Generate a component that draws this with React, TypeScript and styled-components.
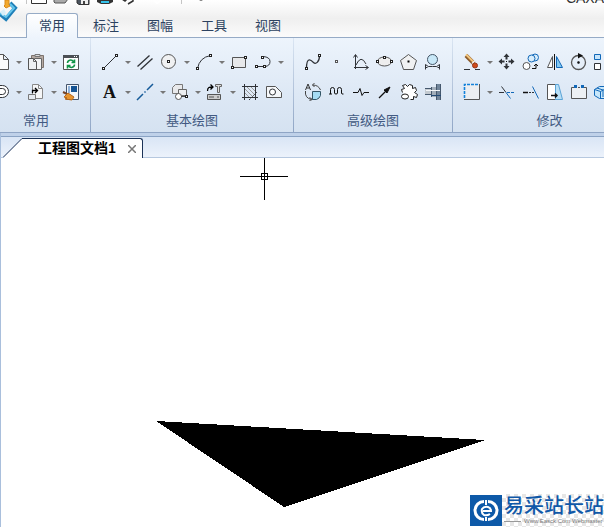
import React from 'react';
import styled, { createGlobalStyle } from 'styled-components';

const ink = '#303338';
const blue = '#1268b8';

const GlobalStyle = createGlobalStyle`
  * { box-sizing: border-box; }
  body { margin: 0; overflow: hidden; font-family: "Liberation Sans", "Noto Sans CJK SC", sans-serif; }
  button { font: inherit; color: inherit; margin: 0; padding: 0; border: 0; background: none; }
`;

const Window = styled.div`
  display: flex;
  flex-direction: column;
  min-height: 100vh;
  overflow: hidden;
  background: #fff;
`;

const Header = styled.header`
  position: relative;
  display: flex;
  flex-direction: column;
  background: linear-gradient(#ffffff, #efefef 50%, #fbfbfb);
  border-bottom: 1px solid #96abc6;
`;

const TitleBar = styled.div`
  display: flex;
  justify-content: space-between;
  height: 13px;
  overflow: hidden;
`;

const QuickAccess = styled.div`
  display: flex;
  padding-left: 26px;
`;

const Title = styled.span`
  margin-top: -10px;
  font-size: 14px;
  line-height: 16px;
  color: #333;
`;

const AppButton = styled.button`
  position: absolute;
  top: 0;
  left: 0;
  line-height: 0;
`;

const Tabs = styled.nav`
  display: flex;
  height: 24px;
  padding-left: 25px;
`;

const Tab = styled.button<{ $active?: boolean }>`
  height: ${p => (p.$active ? 25 : 24)}px;
  margin: 0 1px;
  padding: 0 12px;
  border: 1px solid ${p => (p.$active ? '#96abc6' : 'transparent')};
  border-bottom: 0;
  border-radius: 3px 3px 0 0;
  background: ${p => (p.$active ? 'linear-gradient(#ffffff, #edf4fc)' : 'none')};
  color: #2c4260;
  font-size: 13px;
  line-height: 22px;
  white-space: nowrap;
`;

const Ribbon = styled.section`
  display: flex;
  overflow: hidden;
  background: linear-gradient(#edf4fc, #dde8f5 60%, #d5e2f1);
  border-bottom: 1px solid #8fa5c5;
`;

const Group = styled.div<{ $clipped?: boolean }>`
  flex: none;
  display: flex;
  flex-direction: column;
  margin-left: ${p => (p.$clipped ? -18 : 0)}px;
  padding: 9px 7px 0;
  border-right: 1px solid;
  border-image: linear-gradient(#dbe6f3, #8fa5c5) 1;
`;

const ToolRow = styled.div`
  display: flex;
  height: 30px;
`;

const Tool = styled.button`
  display: grid;
  place-items: center;
  width: 24px;
  height: 30px;
`;

const DropButton = styled.button`
  display: grid;
  place-items: center;
  width: 11px;
  height: 30px;
`;

const Caret = styled.span`
  border: 3px solid transparent;
  border-top-color: #777;
  border-bottom: 0;
`;

const GroupLabel = styled.div`
  height: 25px;
  color: #425a82;
  font-size: 13px;
  line-height: 27px;
  text-align: center;
`;

const DocumentBar = styled.div`
  display: flex;
  height: 25px;
  padding: 5px 0 0 2px;
  background: linear-gradient(#bfd1e9 0 3px, #8aa3c4 3px 4px, #d9e5f5 4px, #ecf2fb);
  border-bottom: 1px solid #b6c8df;
  border-left: 1px solid #a9bfdc;
`;

const DocumentTab = styled.div`
  display: flex;
  height: 20px;
`;

const TabBody = styled.div`
  display: flex;
  align-items: center;
  gap: 12px;
  padding: 0 6px 0 15px;
  border-top: 1px solid #1c3358;
  border-right: 1px solid #1c3358;
  border-top-right-radius: 3px;
  background: #fff;
  color: #000;
  font-size: 14px;
  font-weight: bold;
  line-height: 18px;
  white-space: nowrap;
`;

const TabName = styled.span`
  height: 20px;
`;

const Close = styled.button`
  line-height: 0;
`;

const Canvas = styled.main`
  position: relative;
  flex: 1;
  min-height: 369px;
  overflow: hidden;
  border-left: 1px solid #a9bfdc;
  background: #fff;
`;

const Drawing = styled.svg`
  position: absolute;
  top: 0;
  left: 0;
`;

const Watermark = styled.div`
  position: absolute;
  right: 0;
  bottom: 0;
  display: flex;
  height: 33px;
`;

const WatermarkText = styled.div`
  padding: 0 0 0 2px;
  background: repeating-conic-gradient(#e6e6e6 0 25%, #fff 0 50%) 0 0 / 8px 8px;
`;

const Brand = styled.div`
  color: #1058a8;
  font-size: 20px;
  font-weight: 500;
  line-height: 24px;
`;

const Tagline = styled.div`
  display: flex;
  align-items: center;
  gap: 3px;
  color: #777;
  font-size: 6px;
  line-height: 6px;
  white-space: nowrap;
  &::before {
    content: '';
    width: 17px;
    border-top: 1px solid #999;
  }
`;

const Dot = ({ x, y }: { x: number; y: number }) => (
  <rect x={x} y={y} width="2" height="2" fill="#fff" stroke="#222" />
);

const icons: Record<string, React.ReactNode> = {
  page: <path d="M3.5 1.5h8l5 5v10h-13zM11.5 1.5v5h5" fill="#fafafa" stroke="#555" />,
  paste: <>
    <path d="M4.5 2.5h12v12h-12z" fill="#b5aaa3" stroke="#7d736d" />
    <path d="M8 1.5h5v2H8z" fill="#ddd" stroke="#777" />
    <path d="M7.5 5.5h7v11h-7z" fill="#f4f5f6" stroke="#666" />
    <path d="M1.5 5.5h5l3 3v8h-8z" fill="#eef0f2" stroke="#555" />
    <path d="M6.5 5.5v3h3" stroke="#666" />
  </>,
  refresh: <>
    <path d="M1.5 2.5h15v14h-15z" fill="#fff" stroke="#555" />
    <path d="M1 2h16v3H1z" fill="#4c5055" stroke="none" />
    <path d="M12 3.5h1M14 3.5h1" stroke="#fff" />
    <path d="M5.5 10c0-3 4-4 6-1.5M12.5 6.500v3h-3M12.500 11.500c0 3-4 4-6 1.500M5.500 15.500v-3h3" stroke="#139447" strokeWidth="1.6" />
  </>,
  slot: <>
    <rect x="-4" y="2.5" width="20.5" height="12" rx="6" fill="#fff" />
    <rect x="0" y="5.5" width="13.5" height="6" rx="3" />
  </>,
  insert: <>
    <path d="M5.5 1.5h6l4 4v10h-10z" fill="#f5f6f7" stroke="#888" />
    <path d="M11.5 1.5v4h4" stroke="#888" />
    <path d="M1.5 11.5h7v5h-7z" fill="#e5eaf0" stroke="#777" />
    <path d="M5.5 10V7.500h5M8 5l2.500 2.500L8 10" stroke="#000" strokeWidth="1.3" />
  </>,
  brush: <>
    <path d="M4.5 1.5h12v15h-12z" fill="#f2f5f9" stroke="#45566d" />
    <path d="M6 3h2v7H6z" fill="#8fb2d9" stroke="none" />
    <path d="M9 3h6v6H9z" fill="#165493" stroke="none" />
    <path d="M1 9l6 3" stroke="#774527" strokeWidth="2" />
    <path d="M6 10l6 4-2 3-7-1 2-1-3-1z" fill="#e8942c" stroke="#b5671c" />
  </>,
  line: <><path d="M2.5 15.5l13-13" /><Dot x={1.5} y={14.5} /><Dot x={14.5} y={1.5} /></>,
  parallel: <path d="M1.5 13.5l12-11M4.5 16.500l12-11" strokeWidth="1.3" />,
  circle: <><circle cx="8.5" cy="8.5" r="7" fill="#f0f1f2" stroke="#555" /><Dot x={7.5} y={7.5} /></>,
  arc: <><path d="M2.5 15.5Q4.5 4.5 15.5 2.5" /><Dot x={1.5} y={14.5} /><Dot x={14.5} y={1.5} /></>,
  rect: <><path d="M2.5 4.5h13v10h-13z" fill="#e7e8ea" stroke="#555" /><Dot x={1.5} y={13.5} /><Dot x={14.5} y={3.5} /></>,
  hook: <><path d="M3 13.5h8q5-.5 5-5t-7-5" /><Dot x={1.5} y={12.5} /><Dot x={9.5} y={12.5} /><Dot x={7.5} y={3.5} /></>,
  centreline: <path d="M1 17l6-6M8.5 9.500l1-1M11 7l6-6" stroke="#155a99" strokeWidth="1.5" />,
  shapes: <>
    <path d="M4.5 1.5h7v9h-10v-6z" fill="#e8e9eb" stroke="#777" />
    <path d="M7.5 6.5h8v6h-8z" fill="#eceef0" stroke="#666" />
    <circle cx="7.500" cy="13.5" r="3" fill="#fff" stroke="#555" />
    <path d="M10 13.500h5" stroke="#444" />
    <Dot x={14.5} y={12.5} />
  </>,
  device: <>
    <path d="M1.500 8c0-4 2-4 5-4M4.500 1.500L7 4 4.500 6.500" stroke="#000" strokeWidth="1.3" />
    <path d="M9.5 1.5h6v2h-2v6h-2v-6h-2z" fill="#ddd" stroke="#666" />
    <path d="M1.5 11.5h13v5h-13z" fill="#ccc" stroke="#555" />
    <path d="M3 14h5M11 14h2" stroke="#555" />
  </>,
  hatch: <>
    <path d="M3.5 1v16M14.5 1v16M1 3.500h16M1 14.500h16" />
    <path d="M4 10l4 4M4 6l8 8M6 4l8 8M10 4l4 4" stroke="#999" />
    <path d="M8 17l8-8" strokeDasharray="2 1" />
  </>,
  block: <><path d="M1.5 3.5h9l6 6v5h-15z" fill="#f5f7f9" stroke="#555" /><circle cx="7.5" cy="9" r="3" fill="#fff" /></>,
  spline: <><path d="M2.5 15.500c0-13 5-8 7-6s6 0 6-7" strokeWidth="1.3" /><Dot x={1.5} y={14.5} /><Dot x={14.5} y={1.5} /></>,
  point: <rect x="7.5" y="7.5" width="2" height="2" fill="#fff" stroke="#555" />,
  formula: <path d="M3.5 16V2M1.500 4.500l2-3 2 3M2 14.500h14M13.500 12.500l3 2-3 2M4 12Q9 1 14 11" />,
  ellipse: <><ellipse cx="8.5" cy="8.5" rx="7" ry="4.5" fill="#eee" stroke="#555" /><Dot x={.5} y={7.5} /><Dot x={7.5} y={3.5} /><Dot x={14.5} y={7.5} /></>,
  pentagon: <><path d="M8.5 1.5l8 6-3 9h-10l-3-9z" fill="#f0f1f2" stroke="#555" /><path d="M7.5 8.500h2" strokeWidth="2" stroke="#000" /></>,
  lens: <><circle cx="8.5" cy="6.5" r="5" fill="#c8e8f8" stroke="#456" /><path d="M1.5 16.500v-5q2 3 7 2 5 1 7-2v5M1.500 14.500h2M13.500 14.500h2" /></>,
  rotateText: <>
    <path d="M1.5 8q-1 7 6 8.500M8.500 2q6 0 8 5M10.500 0l-2 2 2 2M5.500 14.500l3 2-3 1" stroke="#444" />
    <path d="M1.5 7L4 1l2.500 6M2.500 5h3" stroke="#333" />
    <path d="M8.5 8.500h8v4q-1 3-4 4h-4z" fill="#a5dcf4" stroke="#356" />
  </>,
  wave: <path d="M1 11h3M2.500 11V6.500q0-2 2-2t2 2V10q0 1 1.500 1T9.500 10V6.500q0-2 2-2t2 2V10q0 1.500 2 1" stroke="#111" />,
  breakline: <path d="M1 9.500h5l2-4 2 7 2-3h5" stroke="#111" />,
  arrow: <><path d="M3 15l8-8" stroke="#111" strokeWidth="1.3" /><path d="M14 4L8 7l3 3z" fill="#111" stroke="#111" /></>,
  gears: <>
    <path d="M2.5 9.5l-1-3 3-1-2-3 3-1 2 2 2-2 3 1v3l3-1 1 3-2 2 3 2-1 3-3-1v3h-3" fill="#fff" stroke="#222" />
    <ellipse cx="5" cy="13.5" rx="3.5" ry="2.5" fill="#fff" stroke="#222" />
  </>,
  shaft: <>
    <path d="M1 5h6v7H1z" fill="#c3cad1" stroke="none" />
    <path d="M7 4h5v10H7z" fill="#a3afbb" stroke="none" />
    <path d="M12 1h5v16h-5z" fill="#71859a" stroke="none" />
    <path d="M1 5.500h6M1 11.500h6M7.500 4v10M12.500 1v16M16.500 1v16" stroke="#45586d" />
    <path d="M2 7.500h14" stroke="#f4f7fa" />
    <path d="M7 12.500h10" stroke="#234b76" />
  </>,
  erase: <>
    <path d="M3 2.5l8 8" stroke="#8b5a2a" strokeWidth="4" />
    <path d="M3 1.5l8 8" stroke="#f1c57d" strokeWidth="2" />
    <path d="M9 10.500l3-3" stroke="#eee" strokeWidth="1.5" />
    <circle cx="12" cy="12.5" r="2.5" fill="#cf4b1c" stroke="#9b3818" />
    <path d="M1 16.500h6M12 16.500h5" />
  </>,
  move: <>
    <path d="M8.500 3v3.500M8.500 10.500V14M3 8.500h3.500M10.500 8.500H14" strokeWidth="2" />
    <path d="M5.500 4l3-3.500 3 3.500zM5.500 13l3 3.500 3-3.500zM4 5.500l-3.500 3 3.500 3zM13 5.500l3.500 3-3.500 3z" fill={ink} stroke="none" />
    <path d="M8 8.500h1" stroke="#111" />
  </>,
  copy: <>
    <circle cx="13" cy="4.5" r="3.5" fill="#d8edfb" stroke={blue} />
    <circle cx="9.500" cy="5.500" r="3.5" fill="#d8edfb" stroke={blue} />
    <circle cx="4.500" cy="13" r="3.5" fill="#fff" stroke="#555" />
    <path d="M10 15.500h4V11M12 13l2-2 2 2" stroke="#111" />
  </>,
  mirror: <><path d="M6.500 3.500v11h-5z" fill="#fff" stroke="#555" /><path d="M8.500 1v16" stroke="#111" /><path d="M10.500 3.500v11h6z" fill="#83c8f1" stroke={blue} /></>,
  rotate: <><circle cx="8.500" cy="9.500" r="7" stroke="#555" strokeWidth="1.3" /><path d="M8 0l5 2.500-5 3z" fill="#111" stroke="none" /><circle cx="8.500" cy="9.500" r="1" fill="#111" /></>,
  array: <><path d="M.5 1.500h6v5h-6zM10.500 1.500h5v5h-5z" fill="#c7e5fb" stroke={blue} /><path d="M.5 10.500h6v6h-6zM10.500 10.500h5v6h-5z" fill="#fff" /></>,
  marquee: <><path d="M1.500 1.500h15v15h-15z" fill="#eceef1" stroke="none" /><path d="M16.500 1v15.500H1" stroke="#555" /><path d="M1.500 15V1.500H16" stroke="#1482da" strokeWidth="1.6" strokeDasharray="3 1" /></>,
  trim: <><path d="M1 9.500h5M3.500 3.500l4.500 6" /><path d="M9 9.500h8" stroke={blue} strokeDasharray="3 1" /><path d="M8 9.500l4.500 6" stroke={blue} /></>,
  extend: <><path d="M1 9.500h5" stroke="#111" strokeWidth="1.5" /><path d="M7 9.500h5" strokeDasharray="2 1" /><path d="M10.500 3.500l6 12" stroke={blue} /></>,
  stretch: <><path d="M1.500 1.500h8v15h-8z" fill="#fff" stroke="#555" /><path d="M9.500 1.500h3l4 15h-7z" fill="#b8dff6" stroke="#5aa3d6" /><path d="M5 12.500h6M9 10.500l2 2-2 2" stroke="#111" strokeWidth="1.5" /></>,
  split: <><path d="M4 4.500H1.500v11h15v-11H14M8 4.500h2" fill="#edf0f3" stroke="#555" /><path d="M4 2h3v3H4zM11 2h3v3h-3z" fill={blue} stroke="none" /></>,
  cube: <path d="M.5 6.500l5-3h10v8l-5 4h-5l-5-3zM.5 6.500l6 2v7M6.500 8.500l9-5M3 5l6 2v7" fill="#c8e7fa" stroke={blue} />,
};

const Icon = ({ name }: { name: string }) => (
  <svg width="18" height="18" viewBox="0 0 18 18" fill="none" stroke={ink} aria-hidden="true">
    {name === 'text'
      ? <text x="2" y="15" fontFamily="Liberation Serif, serif" fontSize="18" fontWeight="bold" fill="#111" stroke="none">A</text>
      : icons[name]}
  </svg>
);

// A trailing "+" marks a tool that carries a drop-down.
const groups = [
  { label: '常用', clipped: true, rows: ['page+ paste+ refresh', 'slot+ insert+ brush'] },
  { label: '基本绘图', rows: ['line+ parallel circle+ arc+ rect hook+', 'text+ centreline+ shapes+ device+ hatch block'] },
  { label: '高级绘图', rows: ['spline point formula ellipse pentagon lens', 'rotateText wave breakline arrow gears shaft'] },
  { label: '修改', rows: ['erase+ move copy mirror rotate array circle', 'marquee+ trim extend stretch split cube rect'] },
];

const Tools = ({ row }: { row: string }) => (
  <ToolRow>
    {row.split(' ').map(item => {
      const name = item.replace('+', '');
      return (
        <React.Fragment key={name}>
          <Tool aria-label={name}><Icon name={name} /></Tool>
          {item.endsWith('+') && <DropButton aria-label={`${name} options`}><Caret /></DropButton>}
        </React.Fragment>
      );
    })}
  </ToolRow>
);

export default function App() {
  return (
    <Window>
      <GlobalStyle />
      <Header>
        <TitleBar>
          <QuickAccess>
            <svg width="180" height="6" viewBox="26 0 180 6" fill="none" aria-hidden="true">
              <path d="M26.500 0v4M181.500 0v4" stroke="#c5c5c5" />
              <path d="M31.500-1v4.500h15V-1" fill="#fff" stroke="#333" />
              <path d="M54-1v3l1 1h10l3-4" fill="#aaa" stroke="#555" />
              <path d="M77-1v4l2 1.500h10V-1z" fill="#4c5560" stroke="#333" />
              <path d="M81 0h7v4h-7z" fill="#eee" /><path d="M83 1h2v3h-2z" fill="#444" />
              <path d="M97-1v3l4 2h8l4-2v-3z" fill="#333" /><path d="M101 1h8v2h-8z" fill="#35c2ea" />
              <path d="M122-1l3 2 2-2M128 4l5-3V-1" stroke="#333" strokeWidth="1.5" />
              <path d="M153 0l4 3 5-3" stroke="#fff" strokeWidth="2" />
              <path d="M199 0h4l-2 1z" fill="#666" />
            </svg>
          </QuickAccess>
          <Title>CAXA</Title>
        </TitleBar>
        <AppButton aria-label="menu">
          <svg width="18" height="22" viewBox="0 0 18 22" fill="none" aria-hidden="true">
            <path d="M0 14l6 5 9-11-5-5" stroke="#1f7fb8" strokeWidth="4" />
            <path d="M0 13l6 4 8-9-4-4" stroke="#65c5eb" strokeWidth="2" />
            <path d="M0 12l4-3 2 4-3 3z" fill="#d7eef8" />
            <path d="M5 0h4v5l1 1-4 2-2-2 1-1z" fill="#f3a92d" stroke="#d98a1c" />
          </svg>
        </AppButton>
        <Tabs>
          {['常用', '标注', '图幅', '工具', '视图'].map((tab, i) => <Tab key={tab} $active={i === 0}>{tab}</Tab>)}
        </Tabs>
      </Header>
      <Ribbon>
        {groups.map(group => (
          <Group key={group.label} $clipped={group.clipped}>
            {group.rows.map(row => <Tools key={row} row={row} />)}
            <GroupLabel>{group.label}</GroupLabel>
          </Group>
        ))}
      </Ribbon>
      <DocumentBar>
        <DocumentTab>
          <svg width="20" height="20" viewBox="0 0 20 20" aria-hidden="true">
            <path d="M0 20L19 .5h1V20z" fill="#fff" /><path d="M0 19.500L19 .5h1" fill="none" stroke="#1c3358" />
          </svg>
          <TabBody>
            <TabName>工程图文档1</TabName>
            <Close aria-label="close">
              <svg width="8" height="8" viewBox="0 0 8 8" stroke="#777" strokeWidth="1.5"><path d="M0 0l8 8M8 0L0 8" /></svg>
            </Close>
          </TabBody>
        </DocumentTab>
      </DocumentBar>
      <Canvas>
        <Drawing width="604" height="369" viewBox="1 158 604 369" shapeRendering="crispEdges" aria-hidden="true">
          <path d="M240 176.500h21M268 176.500h20M264.500 158v15M264.500 180v20M261.500 173.500h6v6h-6zM262 176.500h5M264.500 174v5" fill="none" stroke="#000" />
          <path d="M156 421L485 440 284 507z" fill="#000" />
        </Drawing>
        <Watermark>
          <svg width="32" height="33" viewBox="0 0 32 33" aria-hidden="true">
            <path d="M0 1h32v31H0z" fill="#0d59a8" />
            <path d="M14 7.500a9 9 0 0 0 0 18M18 25.500a9 9 0 0 0 0-18" fill="none" stroke="#fff" strokeWidth="3" />
            <path d="M20 20q-3 2-6 1-3-2-2-6 2-3 6-2 3 1 3 4h-8M16 6v5M16 23v4" fill="none" stroke="#fff" strokeWidth="2" />
          </svg>
          <WatermarkText>
            <Brand>易采站长站</Brand>
            <Tagline>Www.Easck.Com Webmaster</Tagline>
          </WatermarkText>
        </Watermark>
      </Canvas>
    </Window>
  );
}
